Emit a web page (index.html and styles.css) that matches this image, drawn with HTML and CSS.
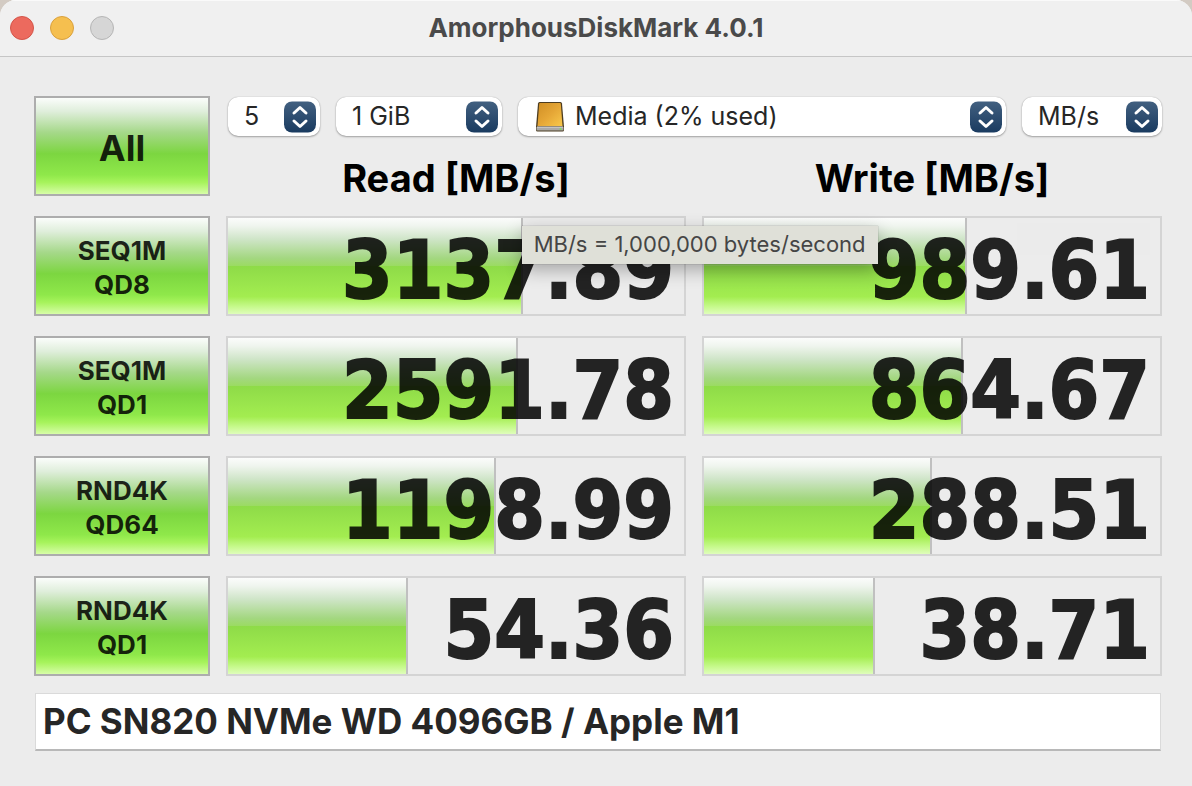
FILE: index.html
```html
<!DOCTYPE html>
<html lang="en">
<head>
    <meta charset="UTF-8">
    <meta name="viewport" content="width=device-width, initial-scale=1.0">
    <title>AmorphousDiskMark 4.0.1</title>
    <link rel="stylesheet" href="styles.css">
</head>
<body>
    <svg class="symbols" aria-hidden="true">
        <defs>
            <linearGradient id="stepper-fill" x1="0" y1="0" x2="0" y2="1">
                <stop offset="0" stop-color="#426080"/>
                <stop offset="1" stop-color="#1a3b60"/>
            </linearGradient>
            <symbol id="stepper" viewBox="0 0 32 32">
                <rect width="32" height="31" y="0.5" rx="8" fill="url(#stepper-fill)"/>
                <path d="M10 12 16 6.500l6 5.500M10 20l6 5.500 6-5.500" fill="none" stroke="#fff" stroke-width="3" stroke-linecap="round" stroke-linejoin="round"/>
            </symbol>
        </defs>
    </svg>
    <div class="window">
        <header class="titlebar">
            <div class="lights">
                <button class="light close" aria-label="Close"></button>
                <button class="light minimize" aria-label="Minimize"></button>
                <button class="light zoom" aria-label="Zoom" disabled></button>
            </div>
            <h1>AmorphousDiskMark 4.0.1</h1>
        </header>
        <main class="content">
            <div class="grid">
                <button class="run run-all">All</button>
                <div class="top">
                    <div class="controls">
                        <div class="popup count">
                            <select aria-label="Test count"><option>5</option></select>
                            <svg class="arrows"><use href="#stepper"/></svg>
                        </div>
                        <div class="popup size">
                            <select aria-label="Test size"><option>1 GiB</option></select>
                            <svg class="arrows"><use href="#stepper"/></svg>
                        </div>
                        <div class="popup drive">
                            <svg class="drive-icon" viewBox="0 0 30 32" aria-hidden="true">
                                <defs>
                                    <linearGradient id="gold" x1="0" y1="0" x2="1" y2="1">
                                        <stop offset="0" stop-color="#d08f25"/>
                                        <stop offset="0.5" stop-color="#e5a636"/>
                                        <stop offset="1" stop-color="#f8c84c"/>
                                    </linearGradient>
                                </defs>
                                <path d="M4.5 1h21q1.200 0 1.500 1.500L29 26v3q0 1.500-1.500 1.500h-25Q1 30.500 1 29v-3L3 2.500Q3.300 1 4.500 1z" fill="#4c3c20"/>
                                <path d="M5 2h20q.700 0 .800.800L27.500 25h-25L4.200 2.800Q4.300 2 5 2z" fill="url(#gold)"/>
                                <path d="M1.500 26h27v2.500q0 1-1 1h-25q-1 0-1-1z" fill="#aaa9a7"/>
                                <path d="M2 26h26" stroke="#ddd" stroke-width="1"/>
                                <circle cx="25.500" cy="28" r="1" fill="#7ce05c"/>
                            </svg>
                            <select aria-label="Drive"><option>Media (2% used)</option></select>
                            <svg class="arrows"><use href="#stepper"/></svg>
                        </div>
                        <div class="popup unit">
                            <select aria-label="Unit"><option>MB/s</option></select>
                            <svg class="arrows"><use href="#stepper"/></svg>
                        </div>
                    </div>
                    <div class="headings">
                        <h2>Read [MB/s]</h2>
                        <h2>Write [MB/s]</h2>
                    </div>
                </div>

                <button class="run">SEQ1M<br>QD8</button>
                <div class="result">
                    <div class="bar" style="width: 64.7%"></div>
                    <span class="value">3137.89</span>
                    <div class="tooltip" role="tooltip">MB/s = 1,000,000 bytes/second</div>
                </div>
                <div class="result">
                    <div class="bar" style="width: 57.7%"></div>
                    <span class="value">989.61</span>
                </div>

                <button class="run">SEQ1M<br>QD1</button>
                <div class="result">
                    <div class="bar" style="width: 63.6%"></div>
                    <span class="value">2591.78</span>
                </div>
                <div class="result">
                    <div class="bar" style="width: 56.8%"></div>
                    <span class="value">864.67</span>
                </div>

                <button class="run">RND4K<br>QD64</button>
                <div class="result">
                    <div class="bar" style="width: 58.8%"></div>
                    <span class="value">1198.99</span>
                </div>
                <div class="result">
                    <div class="bar" style="width: 50%"></div>
                    <span class="value">288.51</span>
                </div>

                <button class="run">RND4K<br>QD1</button>
                <div class="result">
                    <div class="bar" style="width: 39.5%"></div>
                    <span class="value">54.36</span>
                </div>
                <div class="result">
                    <div class="bar" style="width: 37.5%"></div>
                    <span class="value">38.71</span>
                </div>
            </div>
            <input class="note" type="text" aria-label="Note" value="PC SN820 NVMe WD 4096GB / Apple M1">
        </main>
    </div>
</body>
</html>
```
FILE: styles.css
```css
* {
    box-sizing: border-box;
}
body {
    margin: 0;
    background: #d3cbc3;
    font-family: Inter, sans-serif;
    color: #262626;
}
button, select, input {
    font-family: inherit;
    color: inherit;
}
.symbols {
    position: absolute;
    width: 0;
    height: 0;
}
.window {
    min-height: 100vh;
    background: #ececec;
    border-radius: 16px 16px 0 0;
    overflow: hidden;
}

/* title bar */
.titlebar {
    display: grid;
    grid-template-columns: 1fr auto 1fr;
    align-items: center;
    height: 57px;
    padding: 0 10px 2px;
    background: #f0f0f0;
    border-top: 1px solid #fafafa;
    border-bottom: 1px solid #c6c6c6;
}
.titlebar h1 {
    margin: 0;
    font-size: 26px;
    line-height: 32px;
    font-weight: 700;
    color: #4a4a4a;
}
.lights {
    display: flex;
    gap: 16px;
}
.light {
    width: 24px;
    height: 24px;
    padding: 0;
    border: 1px solid;
    border-radius: 50%;
}
.close {
    background: #ec6a5e;
    border-color: #d35549;
}
.minimize {
    background: #f5bf4f;
    border-color: #d9a03d;
}
.zoom {
    background: #d6d6d6;
    border-color: #b5b5b5;
}

.content {
    padding: 39px 30px 34px 34px;
}
.grid {
    display: grid;
    grid-template-columns: 176px 1fr 1fr;
    grid-auto-rows: 100px;
    gap: 20px 16px;
}
.run {
    padding: 4px 0 0;
    border: 2px solid #adadad;
    background: linear-gradient(#fbfdfb 0%, #dfeedb 14%, #a5d889 36%, #7cd640 58%, #8fe84a 80%, #a7f35c 88%, #d7fda8 100%);
    font-size: 26px;
    line-height: 34px;
    font-weight: 700;
    color: rgba(0, 0, 0, 0.85);
}
.run-all {
    font-size: 36px;
}

/* pop-up menus and column headings */
.top {
    grid-column: span 2;
}
.controls {
    display: flex;
    gap: 16px;
    padding: 1px 0 0 2px;
}
.popup {
    position: relative;
    display: flex;
    align-items: center;
    height: 39px;
    background: #fff;
    border-radius: 10px;
    box-shadow: 0 0 1px rgba(0, 0, 0, 0.3), 0 1px 2px rgba(0, 0, 0, 0.3);
}
.popup select {
    flex: 1;
    min-width: 0;
    height: 100%;
    padding: 0 40px 2px 16px;
    border: 0;
    background: transparent;
    appearance: none;
    font-size: 25px;
}
.count {
    width: 92px;
}
.size {
    width: 166px;
}
.drive {
    flex: 1;
    padding-left: 17px;
}
.drive select {
    padding-left: 10px;
}
.unit {
    width: 140px;
}
.drive-icon {
    width: 30px;
    height: 32px;
}
.arrows {
    position: absolute;
    top: 4px;
    right: 4px;
    width: 32px;
    height: 32px;
    pointer-events: none;
}
.headings {
    display: grid;
    grid-template-columns: 1fr 1fr;
    gap: 16px;
    padding-top: 20px;
}
.headings h2 {
    margin: 0;
    font-size: 38px;
    line-height: 44px;
    font-weight: 700;
    text-align: center;
    color: #000;
}

/* results */
.result {
    position: relative;
    display: grid;
    border: 2px solid #d4d4d4;
}
.bar,
.value {
    grid-area: 1 / 1;
}
.bar {
    border-right: 2px solid #c0c0c0;
    background: linear-gradient(#fbfcfb 0%, #f0f5ef 8%, #cfe5c8 22%, #a3d780 42%, #9bdb62 50%, #8edb48 50%, #a3ed50 82%, #c5f98a 92%, #dffdbb 100%);
}
.value {
    padding: 8px 10px 0 0;
    font-family: "DejaVu Sans Condensed", "DejaVu Sans", sans-serif;
    font-size: 81px;
    line-height: 88px;
    font-weight: 700;
    text-align: right;
    color: #000;
    -webkit-text-stroke: 2px #000;
    opacity: 0.85;
}
.tooltip {
    position: absolute;
    z-index: 1;
    top: 8px;
    left: 64.4%;
    padding: 0 12px 2px;
    background: #dfe0d8;
    box-shadow: 0 0 1px rgba(0, 0, 0, 0.4), 0 6px 18px rgba(0, 0, 0, 0.3);
    font-size: 22px;
    line-height: 36px;
    white-space: nowrap;
    color: #454545;
}

.note {
    display: block;
    width: calc(100% - 2px);
    height: 58px;
    margin: 17px 1px 0;
    padding: 0 7px 2px;
    border: 1px solid #dadada;
    border-bottom: 2px solid #b8b8b8;
    background: #fff;
    font-size: 35px;
    font-weight: 700;
}
```
